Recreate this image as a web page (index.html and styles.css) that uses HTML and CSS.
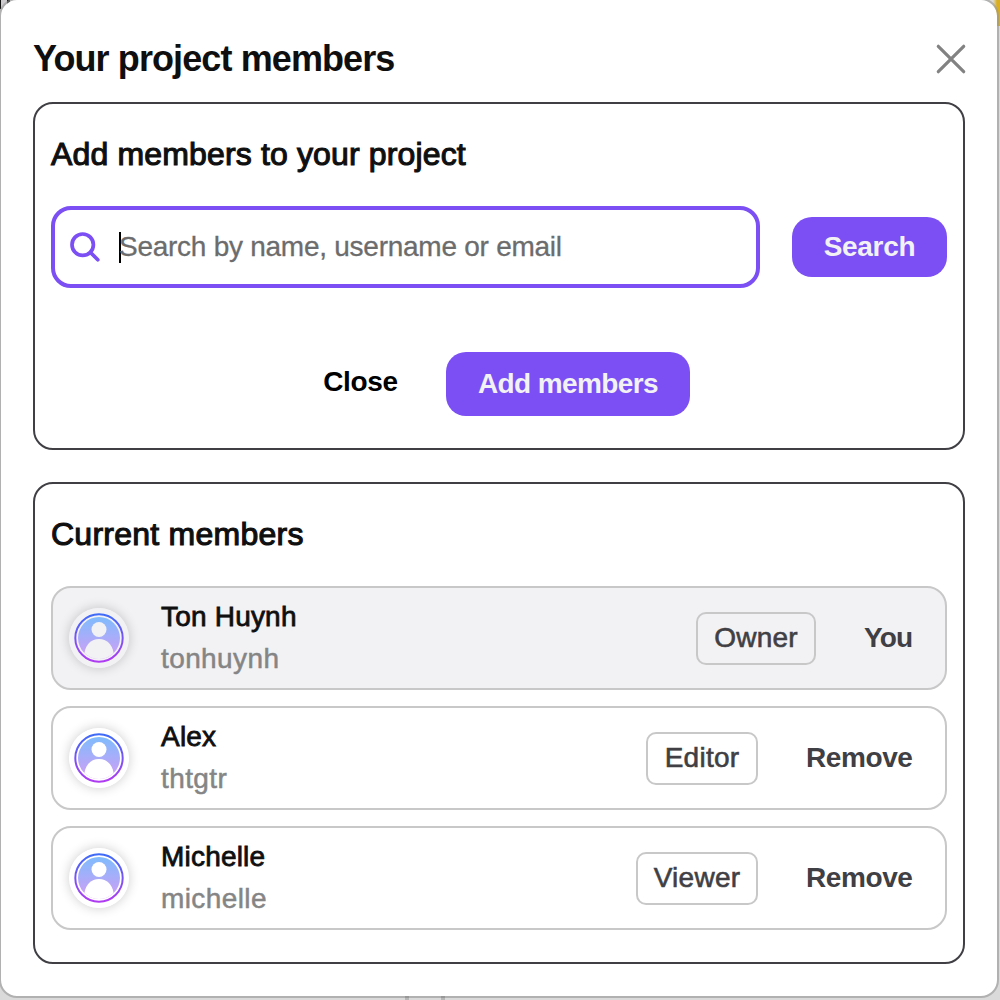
FILE: index.html
```html
<!DOCTYPE html>
<html lang="en">
<head>
<meta charset="utf-8">
<title>Your project members</title>
<link rel="stylesheet" href="styles.css">
</head>
<body>
<div class="backdrop">
  <i class="corner-dark"></i><i class="corner-gold"></i><i class="tick tick-a"></i><i class="tick tick-b"></i>
</div>
<svg class="defs" aria-hidden="true">
  <defs>
    <linearGradient id="ring" x1="0" y1="0" x2="0" y2="1"><stop offset="0" stop-color="#3f6bf8"/><stop offset="1" stop-color="#b03cf2"/></linearGradient>
    <linearGradient id="fill" x1="0" y1="0" x2="0" y2="1"><stop offset="0" stop-color="#7fbcfd"/><stop offset="1" stop-color="#d49cf5"/></linearGradient>
    <clipPath id="disc"><circle cx="30" cy="30" r="21"/></clipPath>
    <symbol id="avatar" viewBox="0 0 60 60">
      <circle cx="30" cy="30" r="30" fill="currentColor"/>
      <circle cx="30" cy="30" r="23.700" fill="none" stroke="url(#ring)" stroke-width="2"/>
      <circle cx="30" cy="30" r="21" fill="url(#fill)"/>
      <circle cx="30" cy="21.500" r="7.500" fill="currentColor"/>
      <path d="M15.500 52V44.500C17 36.500 22 31 30 31s13 5.500 14.500 13.500V52z" fill="currentColor" clip-path="url(#disc)"/>
    </symbol>
  </defs>
</svg>
<main class="modal">
  <header class="modal-header">
    <h1 class="title">Your project members</h1>
    <button class="dismiss" aria-label="Close dialog"><svg width="30" height="30" viewBox="0 0 30 30"><path d="M2.300 2.300 27.700 27.700M27.700 2.300 2.300 27.700" fill="none" stroke="#828282" stroke-width="3.200" stroke-linecap="round"/></svg></button>
  </header>
  <section class="card add-card">
    <h2 class="subtitle">Add members to your project</h2>
    <div class="search-row">
      <div class="search-field">
        <svg class="search-icon" width="32" height="32" viewBox="0 0 32 32" fill="none" stroke="#7b4ff3" stroke-linecap="round"><circle cx="13.700" cy="13.700" r="10.700" stroke-width="3.700"/><path d="M21.500 21.500 28.800 28.700" stroke-width="3.700"/></svg>
        <span class="caret"></span><span class="placeholder">Search by name, username or email</span>
      </div>
      <button class="button search-button">Search</button>
    </div>
    <div class="actions">
      <button class="close-button">Close</button>
      <button class="button add-button">Add members</button>
    </div>
  </section>
  <section class="card members-card">
    <h2 class="subtitle current">Current members</h2>
    <ul class="members">
      <li class="member self">
        <svg class="avatar"><use href="#avatar"/></svg>
        <div class="identity"><span class="name">Ton Huynh</span><span class="handle">tonhuynh</span></div>
        <span class="role owner">Owner</span><span class="action you">You</span>
      </li>
      <li class="member">
        <svg class="avatar"><use href="#avatar"/></svg>
        <div class="identity"><span class="name">Alex</span><span class="handle">thtgtr</span></div>
        <span class="role editor">Editor</span><span class="action">Remove</span>
      </li>
      <li class="member">
        <svg class="avatar"><use href="#avatar"/></svg>
        <div class="identity"><span class="name">Michelle</span><span class="handle">michelle</span></div>
        <span class="role viewer">Viewer</span><span class="action">Remove</span>
      </li>
    </ul>
  </section>
</main>
</body>
</html>
```
FILE: styles.css
```css
* { box-sizing: border-box; }
body {
  margin: 0;
  width: 1000px;
  height: 1000px;
  overflow: hidden;
  background: #dadadb;
  font-family: "Liberation Sans", Arial, sans-serif;
  font-size: 27px;
  color: #0f0f10;
}
button { margin: 0; padding: 0; border: 0; background: none; font: inherit; color: inherit; }
h1, h2, ul { margin: 0; padding: 0; }
.defs { position: absolute; width: 0; height: 0; }
.backdrop i { position: absolute; }
.corner-dark { left: 0; top: 0; width: 10px; height: 9px; background: linear-gradient(90deg, #111 1px, #cfcccf 1px 7px, #111 7px); }
.corner-gold { left: 988px; top: 0; width: 12px; height: 26px; background: linear-gradient(90deg, #dddcd6 5px, #d9ae20 9px); }
.tick { z-index: 2; top: 996px; width: 4px; height: 4px; background: linear-gradient(#989898 2px, #b6b6b6 2px); }
.tick-a { left: 405px; }
.tick-b { left: 441px; }

.modal {
  position: relative;
  width: 1000px;
  height: 1000px;
  margin: -2px 0 0 -1px;
  padding: 26px 32px 0;
  border: 2px solid rgba(150, 150, 150, .6);
  border-radius: 18px;
  background: #fff;
  background-clip: padding-box;
}
.modal-header { display: flex; align-items: center; justify-content: space-between; height: 76px; padding: 0 0 10px; }
.title { font-size: 36px; line-height: 40px; font-weight: 700; letter-spacing: -.9px; }
.dismiss { display: flex; margin-right: -1px; }
.card { width: 932px; padding: 0 16px; border: 2px solid #3f3f44; border-radius: 20px; }
.add-card { height: 348px; }
.members-card { height: 482px; margin-top: 32px; }
.subtitle { height: 102px; padding-top: 30px; font-size: 32px; line-height: 40px; font-weight: 400; letter-spacing: .15px; -webkit-text-stroke: 1.1px; }
.current { letter-spacing: .25px; }
.search-row { display: flex; align-items: center; gap: 32px; }
.search-field { display: flex; align-items: center; width: 709px; height: 82px; padding-left: 14px; border: 4px solid #7b4ff3; border-radius: 20px; }
.search-icon { flex: none; }
.caret { width: 2px; height: 31px; margin-left: 18px; background: #000; }
.placeholder { margin-left: -2px; padding-bottom: 1px; font-size: 28px; color: #6c6c6c; letter-spacing: -.26px; -webkit-text-stroke: .3px; }
.button { border-radius: 20px; background: #7b4ff3; color: #f2f2f5; font-weight: 700; }
.search-button { width: 155px; height: 60px; padding-bottom: 1px; font-size: 28px; letter-spacing: -.3px; }
.actions { display: flex; align-items: center; padding: 64px 0 0 272px; }
.close-button { width: 75px; height: 60px; padding-bottom: 4px; font-size: 28px; letter-spacing: -.3px; font-weight: 700; color: #000; white-space: nowrap; }
.add-button { width: 244px; height: 64px; margin-left: 48px; font-size: 28px; letter-spacing: -.6px; }
.members { display: grid; gap: 16px; list-style: none; }
.member { display: flex; align-items: center; height: 104px; padding: 0 32px 0 16px; border: 2px solid #c8c8c9; border-radius: 20px; color: #fff; }
.member.self { background: #f2f2f5; color: #f2f2f5; }
.avatar { flex: none; width: 60px; height: 60px; border-radius: 50%; box-shadow: 0 0 12px rgba(0, 0, 0, .2); }
.identity { display: flex; flex-direction: column; margin: 0 auto 0 32px; line-height: 42px; font-size: 28px; }
.name { color: #0f0f10; letter-spacing: .2px; -webkit-text-stroke: .8px; }
.handle { color: #858585; letter-spacing: .4px; -webkit-text-stroke: .5px; }
.role { display: flex; align-items: center; justify-content: center; height: 53px; padding-bottom: 1px; border: 2px solid #c8c8c9; border-radius: 10px; color: #3f3f44; font-size: 28px; letter-spacing: .25px; -webkit-text-stroke: .6px; }
.owner { width: 120px; }
.editor { width: 112px; }
.viewer { width: 122px; }
.action { width: 107px; margin-left: 48px; color: #3f3f44; font-size: 28px; letter-spacing: -.4px; font-weight: 700; white-space: nowrap; padding-bottom: 1px; }
.you { width: 49px; letter-spacing: -.8px; }
```
